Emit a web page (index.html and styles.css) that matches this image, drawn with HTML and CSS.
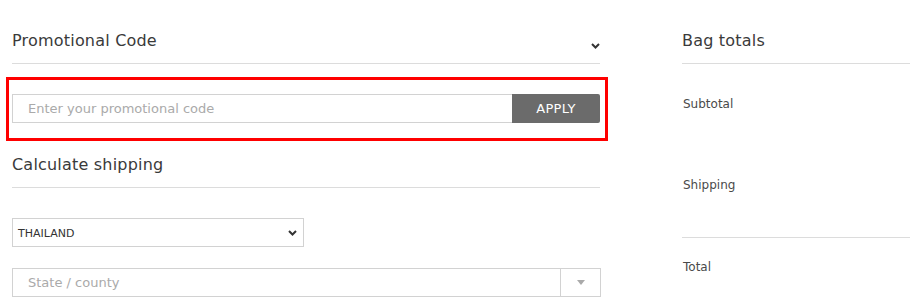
FILE: index.html
```html
<!DOCTYPE html>
<html lang="en">
<head>
<meta charset="utf-8">
<title>Cart</title>
<link rel="stylesheet" href="styles.css">
</head>
<body>
<div class="page">
  <div class="left">
    <div class="sec-head">
      <span class="sec-title">Promotional Code</span>
      <svg class="chev" width="9" height="6" viewBox="0 0 9 6"><polyline points="1,1 4.5,4.5 8,1" fill="none" stroke="#333" stroke-width="2"/></svg>
    </div>
    <div class="promo-box">
      <div class="promo-row">
        <div class="field promo-input"><span class="ph">Enter your promotional code</span></div>
        <div class="btn-apply">APPLY</div>
      </div>
    </div>
    <div class="sec-head sec-head-ship">
      <span class="sec-title">Calculate shipping</span>
    </div>
    <div class="field country">
      <span class="country-val">THAILAND</span>
      <svg class="sel-chev" width="9" height="6" viewBox="0 0 9 6"><polyline points="1,1 4.5,4.5 8,1" fill="none" stroke="#333" stroke-width="2"/></svg>
    </div>
    <div class="field state">
      <span class="ph">State / county</span>
      <div class="state-arrow">
        <svg width="8" height="5" viewBox="0 0 8 5"><polygon points="0,0 8,0 4,5" fill="#aaa"/></svg>
      </div>
    </div>
  </div>
  <div class="right">
    <div class="sec-head">
      <span class="sec-title">Bag totals</span>
    </div>
    <div class="tot-row tot-sub">Subtotal</div>
    <div class="tot-row tot-ship">Shipping</div>
    <div class="tot-row tot-total">Total</div>
  </div>
</div>
</body>
</html>
```
FILE: styles.css
```css
html, body {
  margin: 0;
  padding: 0;
  background: #fff;
}
body {
  width: 910px;
  height: 305px;
  overflow: hidden;
  font-family: "DejaVu Sans", "Liberation Sans", sans-serif;
  color: #333;
}
.page {
  display: flex;
  padding-left: 12px;
}
.left {
  width: 588px;
  flex: none;
}
.right {
  margin-left: 82px;
  width: 260px;
  flex: none;
}
.sec-head {
  box-sizing: border-box;
  height: 64px;
  padding-top: 31px;
  border-bottom: 1px solid #dcdcdc;
  display: flex;
  justify-content: space-between;
  align-items: flex-start;
}
.sec-title {
  font-size: 16px;
  line-height: 20px;
  color: #3a3a3a;
  letter-spacing: 0.2px;
}
.chev {
  margin-top: 12px;
}
.promo-box {
  margin-top: 13px;
  margin-left: -6px;
  width: 602px;
  box-sizing: border-box;
  border: 3px solid #ff0000;
  padding: 14px 4px 15px 3px;
}
.promo-row {
  display: flex;
}
.field {
  box-sizing: border-box;
  height: 29px;
  border: 1px solid #d2d2d2;
  display: flex;
  align-items: center;
}
.promo-input {
  width: 500px;
  padding-left: 15px;
  border-right: none;
}
.ph {
  font-size: 13px;
  color: #aaa;
}
.btn-apply {
  width: 88px;
  height: 29px;
  background: #6b6b6b;
  color: #fff;
  font-size: 13px;
  letter-spacing: 0.3px;
  display: flex;
  align-items: center;
  justify-content: center;
  border-radius: 0 2px 2px 0;
}
.sec-head-ship {
  height: 47px;
  padding-top: 14px;
}
.country {
  margin-top: 30px;
  width: 292px;
  padding: 1px 6px 0 5px;
  justify-content: space-between;
}
.country-val {
  font-size: 11px;
  color: #333;
}
.state {
  margin-top: 21px;
  width: 589px;
  padding-left: 15px;
  justify-content: space-between;
}
.state-arrow {
  width: 39px;
  height: 100%;
  border-left: 1px solid #d2d2d2;
  display: flex;
  align-items: center;
  justify-content: center;
}
.tot-row {
  font-size: 12px;
  line-height: 16px;
  color: #4a4a4a;
  padding-left: 1px;
}
.tot-sub {
  padding-top: 32px;
}
.tot-ship {
  padding-top: 65px;
  padding-bottom: 44px;
  border-bottom: 1px solid #dcdcdc;
}
.tot-total {
  padding-top: 21px;
}
```
